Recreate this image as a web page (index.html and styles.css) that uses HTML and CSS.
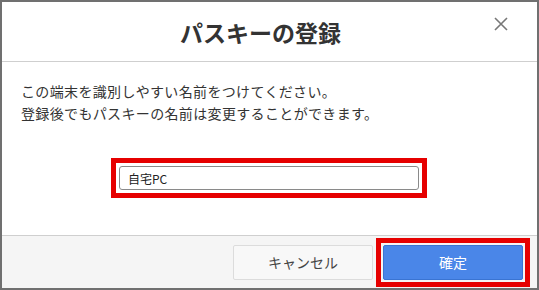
FILE: index.html
```html
<!DOCTYPE html>
<html>
    <head>
        <meta charset="utf-8">
        <title>パスキーの登録</title>
        <link rel="stylesheet" href="styles.css">
    </head>
    <body>
        <div class="modal">
            <div class="modal-head">
                <h2 class="title">パスキーの登録</h2>
                <span class="close">
                    <svg width="14" height="14" viewBox="0 0 14 14"><path d="M1 1L13 13M13 1L1 13" stroke="#777" stroke-width="1.6" fill="none"/></svg>
                </span>
            </div>
            <div class="modal-body">
                <p class="desc">この端末を識別しやすい名前をつけてください。<br>登録後でもパスキーの名前は変更することができます。</p>
                <div class="mark mark-input">
                    <input type="text" class="name-input" value="自宅PC">
                </div>
            </div>
            <div class="modal-foot">
                <div class="btn btn-cancel">キャンセル</div>
                <div class="mark mark-btn">
                    <div class="btn btn-ok">確定</div>
                </div>
            </div>
        </div>
    </body>
</html>
```

FILE: styles.css
```css
*{
    margin: 0;
    padding: 0;
    box-sizing: border-box;
}
body{
    font-family: "Noto Sans CJK JP", "Noto Sans", sans-serif;
    color: #333;
    background: #fff;
}
.modal{
    width: 539px;
    height: 290px;
    border: 2px solid #707070;
    display: flex;
    flex-direction: column;
}
.modal-head{
    height: 60px;
    border-bottom: 1px solid #cfcfcf;
    display: flex;
    align-items: center;
    justify-content: center;
    position: relative;
    padding-right: 18px;
}
.title{
    font-size: 23px;
    font-weight: bold;
    color: #333;
    line-height: 1;
    margin-top: 2px;
}
.close{
    position: absolute;
    right: 29px;
    top: 15px;
    width: 14px;
    height: 14px;
    display: block;
}
.close svg{
    display: block;
}
.modal-body{
    flex: 1;
    padding: 18px 0 0 19px;
}
.desc{
    font-size: 14px;
    line-height: 22px;
    letter-spacing: 0.35px;
}
.mark{
    border: 5px solid #e60000;
}
.mark-input{
    width: 316px;
    margin: 34px 0 0 90px;
    padding: 3px;
}
.name-input{
    display: block;
    width: 300px;
    height: 24px;
    border: 1px solid #8a8a8a;
    border-radius: 3px;
    padding: 0 8px;
    font-family: "Noto Sans CJK JP", sans-serif;
    font-size: 12px;
    color: #222;
    outline: none;
}
.modal-foot{
    height: 53px;
    border-top: 1px solid #cfcfcf;
    background: #f5f5f5;
    display: flex;
    justify-content: flex-end;
    align-items: center;
    padding-right: 7px;
    gap: 3px;
}
.btn{
    width: 140px;
    height: 35px;
    line-height: 33px;
    text-align: center;
    font-size: 14px;
    border-radius: 2px;
}
.btn-cancel{
    background: #f8f8f8;
    border: 1px solid #dcdcdc;
    color: #444;
}
.mark-btn{
    padding: 2px;
}
.btn-ok{
    background: #4a86e8;
    border: 1px solid #3a74d2;
    color: #fff;
}
```
